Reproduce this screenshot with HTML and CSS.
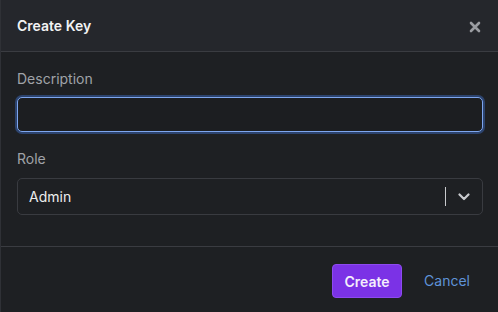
FILE: index.html
```html
<!DOCTYPE html>
<html>
  <head>
    <meta charset="utf-8"/>
    <title>Create Key</title>
    <link rel="stylesheet" href="styles.css">
  </head>
  <body>
    <div class="modal">
      <div class="modal-header">
        <h1>Create Key</h1>
        <span class="close">
          <svg width="12" height="12" viewBox="0 0 12 12">
            <path d="M2 2 L10 10 M10 2 L2 10" stroke="#9a9ca1" stroke-width="2.6" stroke-linecap="round"/>
          </svg>
        </span>
      </div>
      <div class="modal-body">
        <label class="field-label">Description</label>
        <input class="text-input" type="text">
        <label class="field-label role">Role</label>
        <div class="select">
          <span class="select-value">Admin</span>
          <span class="select-sep"></span>
          <span class="select-arrow">
            <svg width="12" height="8" viewBox="0 0 12 8">
              <path d="M1.5 1.5 L6 6 L10.5 1.5" fill="none" stroke="#c9cbcf" stroke-width="2.2" stroke-linecap="round" stroke-linejoin="round"/>
            </svg>
          </span>
        </div>
      </div>
      <div class="modal-footer">
        <button class="btn-primary">Create</button>
        <span class="btn-link">Cancel</span>
      </div>
    </div>
  </body>
</html>
```

FILE: styles.css
```css
* {
  margin: 0;
  padding: 0;
  box-sizing: border-box;
}

html, body {
  height: 100%;
}

body {
  font-family: Inter, 'Noto Sans', sans-serif;
  background: #1e2023;
  color: #e6e7e9;
}

.modal {
  height: 312px;
  border-left: 1px solid #2f3136;
  display: flex;
  flex-direction: column;
}

.modal-header {
  height: 52px;
  background: #25272c;
  border-bottom: 1px solid #3a3c41;
  display: flex;
  align-items: center;
  justify-content: space-between;
  padding: 0 17px 0 16px;
}

.modal-header h1 {
  font-size: 14px;
  font-weight: 600;
  color: #f2f3f4;
}

.close {
  display: flex;
  margin-top: 3px;
}

.modal-body {
  padding: 17px 15px 31px 16px;
  display: flex;
  flex-direction: column;
  border-bottom: 1px solid #3a3c41;
}

.field-label {
  font-size: 14px;
  line-height: 20px;
  color: #a0a3a8;
  margin-bottom: 8px;
}

.field-label.role {
  margin-top: 17px;
  margin-bottom: 9px;
}

.text-input {
  height: 35px;
  background: #1c1e21;
  border: 1px solid #7ea6ee;
  border-radius: 5px;
  box-shadow: 0 0 0 2px rgba(62, 110, 200, 0.45);
  outline: none;
}

.select {
  height: 37px;
  border: 1px solid #393b40;
  border-radius: 5px;
  display: flex;
  align-items: center;
  padding: 0 0 0 11px;
}

.select-value {
  flex: 1;
  font-size: 14px;
  color: #eceded;
}

.select-sep {
  width: 1px;
  height: 19px;
  background: #c8cacd;
}

.select-arrow {
  width: 36px;
  display: flex;
  justify-content: center;
}

.modal-footer {
  flex: 1;
  display: flex;
  align-items: flex-start;
  justify-content: flex-end;
  padding: 17px 28px 0 0;
  gap: 22px;
}

.btn-primary {
  height: 34px;
  width: 70px;
  background: #7b32e6;
  border: 1px solid #8d4af0;
  border-radius: 4px;
  color: #f4eefc;
  font-family: Inter, 'Noto Sans', sans-serif;
  font-size: 14px;
  font-weight: 600;
}

.btn-link {
  line-height: 34px;
  font-size: 14px;
  color: #5f93d8;
}
```
